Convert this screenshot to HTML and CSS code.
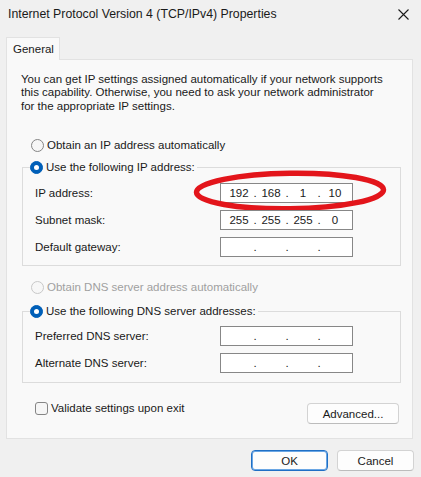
FILE: index.html
```html
<!DOCTYPE html>
<html>
<head>
<meta charset="utf-8">
<link rel="stylesheet" href="styles.css">
</head>
<body>
<div class="window">
  <div class="titlebar">
    <span class="title">Internet Protocol Version 4 (TCP/IPv4) Properties</span>
    <svg class="close" width="11" height="11" viewBox="0 0 11 11"><path d="M0.5 0.5L10.5 10.5M10.5 0.5L0.5 10.5" stroke="#1b1b1b" stroke-width="1.1" fill="none"/></svg>
  </div>
  <div class="tabs"><div class="tab">General</div></div>
  <div class="panel">
    <p class="intro">You can get IP settings assigned automatically if your network supports<br>this capability. Otherwise, you need to ask your network administrator<br>for the appropriate IP settings.</p>

    <div class="radio-row first"><span class="radio"></span>Obtain an IP address automatically</div>

    <fieldset class="group ip-group">
      <legend><span class="radio checked"></span>Use the following IP address:</legend>
      <div class="field-grid">
        <span class="label">IP address:</span>
        <div class="ipbox marked"><span>192</span><i>.</i><span>168</span><i>.</i><span>1</span><i>.</i><span>10</span>
          <svg class="circle-mark" width="196" height="44" viewBox="0 0 196 44"><ellipse cx="98" cy="22" rx="93.5" ry="17.8" transform="rotate(-0.8 98 22)" fill="none" stroke="#e3151b" stroke-width="5.5"/></svg>
        </div>
        <span class="label">Subnet mask:</span>
        <div class="ipbox"><span>255</span><i>.</i><span>255</span><i>.</i><span>255</span><i>.</i><span>0</span></div>
        <span class="label">Default gateway:</span>
        <div class="ipbox"><span></span><i>.</i><span></span><i>.</i><span></span><i>.</i><span></span></div>
      </div>
    </fieldset>

    <div class="radio-row disabled dns-auto"><span class="radio"></span>Obtain DNS server address automatically</div>

    <fieldset class="group dns-group">
      <legend><span class="radio checked"></span>Use the following DNS server addresses:</legend>
      <div class="field-grid">
        <span class="label">Preferred DNS server:</span>
        <div class="ipbox"><span></span><i>.</i><span></span><i>.</i><span></span><i>.</i><span></span></div>
        <span class="label">Alternate DNS server:</span>
        <div class="ipbox"><span></span><i>.</i><span></span><i>.</i><span></span><i>.</i><span></span></div>
      </div>
    </fieldset>

    <div class="bottom-row">
      <div class="check-row"><span class="checkbox"></span>Validate settings upon exit</div>
      <button class="btn advanced">Advanced...</button>
    </div>
  </div>
  <div class="footer">
    <button class="btn ok">OK</button>
    <button class="btn">Cancel</button>
  </div>
</div>
</body>
</html>
```

FILE: styles.css
```css
* { box-sizing: border-box; }
html, body { margin: 0; padding: 0; }
body {
  width: 421px;
  height: 477px;
  background: #f0f0f0;
  font-family: "Liberation Sans", Arial, sans-serif;
  font-size: 11.5px;
  color: #1a1a1a;
  overflow: hidden;
}
.window { width: 421px; height: 477px; }

.titlebar {
  height: 30px;
  display: flex;
  align-items: center;
  justify-content: space-between;
  padding: 0 12px 2px 8px;
}
.title { font-size: 12.3px; color: #1a1a1a; }
.close { display: block; }

.tabs { display: flex; padding-left: 6px; margin-top: 7px; position: relative; z-index: 1; }
.tab {
  width: 54px;
  height: 23px;
  margin-bottom: -1px;
  background: #f9f9f9;
  border: 1px solid #e2e2e2;
  border-bottom: none;
  padding: 4px 0 0 6px;
  line-height: 14px;
}

.panel {
  margin: 0 8px 0 6px;
  height: 380px;
  background: #f9f9f9;
  border: 1px solid #e2e2e2;
  display: flex;
  flex-direction: column;
}

.intro {
  margin: 13px 0 0 14px;
  line-height: 13.4px;
}

.radio-row {
  display: flex;
  align-items: center;
  height: 16px;
  margin-left: 24px;
  gap: 3px;
}
.radio-row.first { margin-top: 24px; }
.radio-row.dns-auto { margin-top: 13px; }
.radio-row.disabled { color: #a0a0a0; }
.radio-row.disabled .radio { border-color: #c8c8c8; background: #f7f7f7; }

.radio {
  width: 13px;
  height: 13px;
  border-radius: 50%;
  border: 1px solid #858585;
  background: #f6f6f6;
  flex: none;
  display: inline-block;
  position: relative;
}
.radio.checked { background: #005fb8; border-color: #005fb8; }
.radio.checked::after {
  content: "";
  position: absolute;
  left: 3px; top: 3px;
  width: 5px; height: 5px;
  border-radius: 50%;
  background: #fff;
}

.group {
  margin: 6px 11px 0 15px;
  padding: 0;
  border: 1px solid #dcdcdc;
  min-width: 0;
}
.dns-group { margin-top: 8px; }
.group legend {
  margin-left: 7px;
  padding: 0 2px 0 0;
  height: 16px;
  display: flex;
  align-items: center;
  gap: 3px;
}
.field-grid {
  display: grid;
  grid-template-columns: 185px 133px;
  grid-auto-rows: 20px;
  row-gap: 7px;
  align-items: center;
  padding: 8px 0 8px 12px;
}
.dns-group .field-grid { padding: 7px 0 9px 12px; }

.ipbox {
  height: 20px;
  background: #fff;
  border: 1px solid #878787;
  display: flex;
  align-items: center;
  padding-left: 5px;
  position: relative;
}
.ipbox span { width: 26px; text-align: center; }
.ipbox i { width: 6px; text-align: center; font-style: normal; }

.circle-mark {
  position: absolute;
  left: -29px;
  top: -15px;
  pointer-events: none;
}

.bottom-row {
  display: flex;
  justify-content: space-between;
  align-items: flex-start;
  margin: 18px 13px 0 28px;
}
.check-row {
  display: flex;
  align-items: center;
  gap: 3px;
  height: 14px;
}
.checkbox {
  width: 13px;
  height: 13px;
  border: 1px solid #858585;
  border-radius: 3px;
  background: #f6f6f6;
  display: inline-block;
}

.btn {
  font-family: inherit;
  font-size: 11.5px;
  color: #1a1a1a;
  background: #fdfdfd;
  border: 1px solid #d3d3d3;
  border-bottom-color: #bcbcbc;
  border-radius: 4px;
  height: 21px;
  padding: 0;
  margin: 0;
}
.advanced { width: 92px; margin-top: 2px; }

.footer {
  display: flex;
  justify-content: flex-end;
  gap: 9px;
  margin: 11px 7px 0 0;
}
.footer .btn { width: 77px; }
.btn.ok {
  border: 1px solid #1f6fc5;
  box-shadow: inset 0 0 0 1px #6aa6e4;
}
```
